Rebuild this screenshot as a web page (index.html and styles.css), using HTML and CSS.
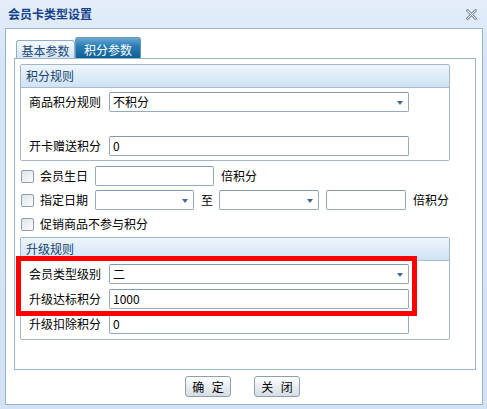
FILE: index.html
```html
<!DOCTYPE html>
<html>
<head>
<meta charset="utf-8">
<link rel="stylesheet" href="styles.css">
</head>
<body>
<div class="win">
  <div class="titlebar">
    <span class="title">会员卡类型设置</span>
    <svg class="close" width="11" height="11" viewBox="0 0 11 11">
      <path d="M1.5 1.5 L9.5 9.5 M9.5 1.5 L1.5 9.5" stroke="#8e9bab" stroke-width="3" stroke-linecap="square"/>
      <path d="M1.5 1.5 L9.5 9.5 M9.5 1.5 L1.5 9.5" stroke="#ffffff" stroke-width="1"/>
    </svg>
  </div>
  <div class="body">
    <div class="tabs">
      <div class="tab">基本参数</div>
      <div class="tab active">积分参数</div>
    </div>
    <div class="panel">
      <div class="fs fs1">
        <div class="fs-head">积分规则</div>
        <div class="fs-body">
          <div class="row"><span class="lbl">商品积分规则</span><div class="field sel w300">不积分<i class="arr"></i></div></div>
          <div class="row"><span class="lbl">开卡赠送积分</span><div class="field w300">0</div></div>
        </div>
      </div>
      <div class="crow r1">
        <span class="cb"></span><span class="clbl">会员生日</span>
        <div class="field w119"></div><span class="txt">倍积分</span>
      </div>
      <div class="crow r2">
        <span class="cb"></span><span class="clbl">指定日期</span>
        <div class="field sel w99"><i class="arr"></i></div><span class="txt zhi">至</span>
        <div class="field sel w100"><i class="arr"></i></div>
        <div class="field w80 ml7"></div><span class="txt">倍积分</span>
      </div>
      <div class="crow r3">
        <span class="cb"></span><span class="clbl">促销商品不参与积分</span>
      </div>
      <div class="fs fs2">
        <div class="fs-head">升级规则</div>
        <div class="fs-body">
          <div class="row"><span class="lbl">会员类型级别</span><div class="field sel w300">二<i class="arr"></i></div></div>
          <div class="row"><span class="lbl">升级达标积分</span><div class="field w300">1000</div></div>
          <div class="row"><span class="lbl">升级扣除积分</span><div class="field w300">0</div></div>
        </div>
      </div>
    </div>
    <div class="btns">
      <button class="btn">确 定</button>
      <button class="btn">关 闭</button>
    </div>
  </div>
  <div class="redbox"></div>
</div>
</body>
</html>
```

FILE: styles.css
```css
* { box-sizing: border-box; }
html, body { margin: 0; padding: 0; }
body {
  width: 487px;
  height: 409px;
  overflow: hidden;
  font-family: "Noto Sans CJK SC", "Noto Sans", sans-serif;
  font-size: 12px;
  color: #000;
}
.win {
  position: relative;
  width: 487px;
  height: 409px;
  background: linear-gradient(#e4eefa, #d6e5f6 60px, #d3e2f4);
}
.titlebar {
  height: 28px;
  display: flex;
  align-items: center;
  justify-content: space-between;
  padding: 0 10px 0 8px;
}
.title {
  font-weight: bold;
  color: #15428b;
  font-size: 12px;
  line-height: 14px;
}
.close { display: block; margin-top: 1px; }
.body {
  margin-left: 5px;
  width: 478px;
  height: 377px;
  background: #fff;
  border: 1px solid #99b4cf;
}
.tabs {
  height: 29px;
  display: flex;
  align-items: flex-end;
  padding-left: 10px;
}
.tab {
  width: 59px;
  height: 18px;
  border: 1px solid #8eaccb;
  border-bottom: none;
  border-radius: 3px 3px 0 0;
  background: linear-gradient(#f6fafd, #d3e3f1);
  color: #1d4a78;
  font-size: 12px;
  line-height: 17px;
  text-align: center;
  padding-top: 1px;
}
.tab.active {
  width: 66px;
  height: 21px;
  background: linear-gradient(#6aa8d3, #2a7db5 40%, #0d5f96);
  border-color: #6c97bb;
  color: #fff;
  padding-top: 3px;
  line-height: 17px;
}
.panel {
  margin-left: 8px;
  width: 462px;
  height: 312px;
  border: 1px solid #99b6cc;
  padding: 5px 0 0 5px;
}
.fs {
  width: 430px;
  border: 1px solid #a3b6c8;
  border-radius: 2px;
}
.fs-head {
  height: 23px;
  border-bottom: 1px solid #a9bccd;
  background: linear-gradient(#eef5fc, #cfe3f4);
  color: #15436e;
  padding-left: 5px;
  line-height: 22px;
}
.fs-body {
  padding-left: 8px;
  display: flex;
  flex-direction: column;
}
.fs1 .fs-body { padding-top: 4px; padding-bottom: 4px; gap: 24px; }
.fs2 .fs-body { padding-top: 3px; padding-bottom: 5px; gap: 5px; }
.row {
  height: 20px;
  display: flex;
  align-items: center;
}
.lbl { width: 80px; line-height: 20px; }
.field {
  height: 20px;
  border: 1px solid #94aac0;
  border-top-color: #8199b1;
  border-radius: 2px;
  background: #fff;
  padding-left: 3px;
  line-height: 18px;
  position: relative;
}
.w300 { width: 300px; }
.w119 { width: 119px; }
.w99 { width: 99px; }
.w100 { width: 100px; }
.w80 { width: 80px; }
.ml7 { margin-left: 7px; }
.arr {
  position: absolute;
  right: 5px;
  top: 8px;
  width: 0;
  height: 0;
  border-left: 3px solid transparent;
  border-right: 3px solid transparent;
  border-top: 4px solid #3d6a9b;
}
.crow {
  height: 20px;
  display: flex;
  align-items: center;
  padding-left: 1px;
}
.crow.r1 { margin-top: 5px; }
.crow.r2 { margin-top: 4px; }
.crow.r3 { margin-top: 4px; margin-bottom: 3px; }
.cb {
  width: 13px;
  height: 13px;
  border: 1px solid #8c9db0;
  border-radius: 2px;
  background: linear-gradient(135deg, #dfe3e8, #fbfbfc);
  margin-right: 6px;
}
.clbl { width: 55px; white-space: nowrap; line-height: 20px; }
.txt { margin-left: 7px; line-height: 20px; }
.txt.zhi { margin-right: 6px; }
.btns {
  margin-top: 6px;
  height: 21px;
  display: flex;
  gap: 23px;
  padding-left: 179px;
}
.btn {
  width: 46px;
  height: 21px;
  border: 1px solid #8f9fb1;
  border-radius: 3px;
  background: linear-gradient(#ffffff, #e9edf1 50%, #d6dce3);
  font-family: "Noto Sans CJK SC", "Noto Sans", sans-serif;
  font-size: 12px;
  line-height: 18px;
  word-spacing: 5px;
  color: #000;
  padding: 0;
  margin: 0;
}
.redbox {
  position: absolute;
  left: 16px;
  top: 256px;
  width: 401px;
  height: 60px;
  border: 5px solid #ff0000;
}
```
